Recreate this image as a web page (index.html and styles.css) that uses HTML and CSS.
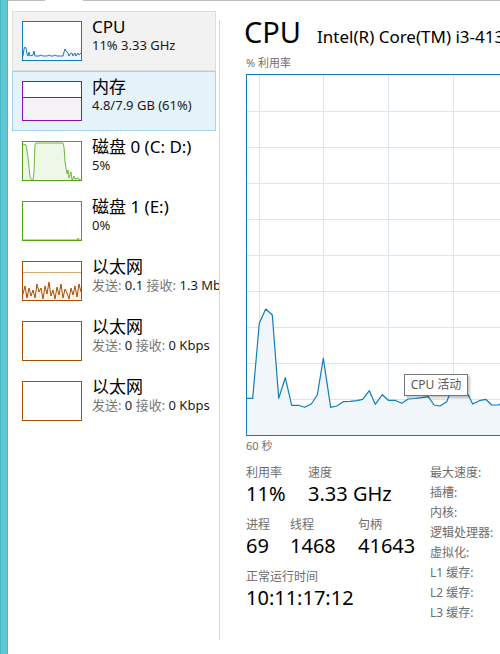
FILE: index.html
```html
<!DOCTYPE html>
<html lang="zh-CN">
<head>
<meta charset="utf-8">
<title>任务管理器 - 性能</title>
<link rel="stylesheet" href="styles.css">
</head>
<body>
<div class="app">
  <div class="rail"></div>
  <div class="content">
    <div class="topline"><span class="seg seg-a"></span><span class="seg-gap"></span><span class="seg seg-b"></span></div>
    <div class="panes">
      <nav class="sidebar">
        <div class="item item-cpu">
          <div class="thumb thumb-cpu">
            <svg width="58" height="38" viewBox="0 0 58 38">
              <polygon class="cpu-fill" points="0,34 1,27 2,25 3,26 4,32 5,34 6,30 7,34 10,33 11,29 12,34 16,34 18,33 20,34 24,34 26,33 28,34 30,34 32,33 34,34 40,34 41,30 42,27 43,29 45,31 46,34 47,32 49,31 50,34 52,31 53,34 55,31 56,33 58,31 58,38 0,38"/>
              <polyline class="cpu-line" points="0,34 1,27 2,25 3,26 4,32 5,34 6,30 7,34 10,33 11,29 12,34 16,34 18,33 20,34 24,34 26,33 28,34 30,34 32,33 34,34 40,34 41,30 42,27 43,29 45,31 46,34 47,32 49,31 50,34 52,31 53,34 55,31 56,33 58,31"/>
            </svg>
          </div>
          <div class="text">
            <div class="title">CPU</div>
            <div class="sub">11% 3.33 GHz</div>
          </div>
        </div>
        <div class="item item-mem">
          <div class="thumb thumb-mem">
            <svg width="58" height="38" viewBox="0 0 58 38">
              <rect class="mem-fill" x="0" y="15" width="58" height="23"/>
              <line class="mem-line" x1="0" y1="15.5" x2="58" y2="15.5"/>
            </svg>
          </div>
          <div class="text">
            <div class="title">内存</div>
            <div class="sub">4.8/7.9 GB (61%)</div>
          </div>
        </div>
        <div class="item">
          <div class="thumb thumb-disk">
            <svg width="58" height="38" viewBox="0 0 58 38">
              <polygon class="disk-fill" points="0,2 3,3 5,15 7,35 9,38 10,38 11,30 12,3 13,1 40,1 41,5 42,20 44,32 45,28 46,36 48,30 49,38 51,34 52,37 55,36 57,38 58,38 0,38"/>
              <polyline class="disk-line" points="0,2 3,3 5,15 7,35 9,38 10,38 11,30 12,3 13,1 40,1 41,5 42,20 44,32 45,28 46,36 48,30 49,38 51,34 52,37 55,36 57,38 58,38"/>
            </svg>
          </div>
          <div class="text">
            <div class="title">磁盘 0 (C: D:)</div>
            <div class="sub">5%</div>
          </div>
        </div>
        <div class="item">
          <div class="thumb thumb-disk">
            <svg width="58" height="38" viewBox="0 0 58 38">
              <polyline class="disk-line" points="0,38 54,38 55,36 56,38 58,38"/>
            </svg>
          </div>
          <div class="text">
            <div class="title">磁盘 1 (E:)</div>
            <div class="sub">0%</div>
          </div>
        </div>
        <div class="item">
          <div class="thumb thumb-eth">
            <svg width="58" height="38" viewBox="0 0 58 38">
              <line class="eth-scale" x1="0" y1="10.5" x2="58" y2="10.5"/>
              <polygon class="eth-fill" points="0,32 2,24 4,36 6,26 8,34 10,28 12,36 14,22 16,30 18,26 20,37 22,24 24,32 26,20 28,34 30,28 32,37 34,25 36,33 38,22 40,36 42,27 44,31 46,37 48,26 50,33 52,24 54,35 56,22 58,30 58,38 0,38"/>
              <polyline class="eth-line" points="0,32 2,24 4,36 6,26 8,34 10,28 12,36 14,22 16,30 18,26 20,37 22,24 24,32 26,20 28,34 30,28 32,37 34,25 36,33 38,22 40,36 42,27 44,31 46,37 48,26 50,33 52,24 54,35 56,22 58,30"/>
            </svg>
          </div>
          <div class="text">
            <div class="title">以太网</div>
            <div class="sub"><span class="k">发送:</span> 0.1 <span class="k">接收:</span> 1.3 Mbps</div>
          </div>
        </div>
        <div class="item">
          <div class="thumb thumb-eth"></div>
          <div class="text">
            <div class="title">以太网</div>
            <div class="sub"><span class="k">发送:</span> 0 <span class="k">接收:</span> 0 Kbps</div>
          </div>
        </div>
        <div class="item">
          <div class="thumb thumb-eth"></div>
          <div class="text">
            <div class="title">以太网</div>
            <div class="sub"><span class="k">发送:</span> 0 <span class="k">接收:</span> 0 Kbps</div>
          </div>
        </div>
      </nav>
      <div class="divider"></div>
      <main class="detail">
        <div class="header">
          <span class="big">CPU</span>
          <span class="model">Intel(R) Core(TM) i3-4130 CPU @ 3.40GHz</span>
        </div>
        <div class="axis">% 利用率</div>
        <div class="chart">
          <svg width="650" height="360" viewBox="0 0 650 360">
            <g class="grid">
              <line x1="12.5" y1="0" x2="12.5" y2="360"/>
              <line x1="76.5" y1="0" x2="76.5" y2="360"/>
              <line x1="141.5" y1="0" x2="141.5" y2="360"/>
              <line x1="206.5" y1="0" x2="206.5" y2="360"/>
              <line x1="271.5" y1="0" x2="271.5" y2="360"/>
              <line x1="0" y1="36.5" x2="650" y2="36.5"/>
              <line x1="0" y1="72.5" x2="650" y2="72.5"/>
              <line x1="0" y1="108.5" x2="650" y2="108.5"/>
              <line x1="0" y1="144.5" x2="650" y2="144.5"/>
              <line x1="0" y1="180.5" x2="650" y2="180.5"/>
              <line x1="0" y1="216.5" x2="650" y2="216.5"/>
              <line x1="0" y1="252.5" x2="650" y2="252.5"/>
              <line x1="0" y1="288.5" x2="650" y2="288.5"/>
              <line x1="0" y1="324.5" x2="650" y2="324.5"/>
            </g>
            <polygon class="area" points="0,323.3 5.7,323.3 12.3,248.3 18.7,234 25.3,240 31.7,323.3 38.3,302.7 44.7,330.3 51.3,330.3 57.7,332.3 64.3,329 70.3,320 76.3,283.3 83.7,332.3 89.7,331 96.3,326.7 103,326.3 109.7,325.7 115.7,324.3 122.3,315.7 128.3,329.3 135.3,319.7 141.3,325.3 148,325.3 154.7,328.3 161.3,324 168,323.5 174.7,322.7 181.3,321.7 187,330 193,331 199.7,326.7 202.3,320 206,313 215,317 221.3,320 225.7,329 232.3,325.7 238.7,324.3 244.7,330 251.3,330 258,327 264,329 270,326 270,360 0,360"/>
            <polyline class="trace" points="0,323.3 5.7,323.3 12.3,248.3 18.7,234 25.3,240 31.7,323.3 38.3,302.7 44.7,330.3 51.3,330.3 57.7,332.3 64.3,329 70.3,320 76.3,283.3 83.7,332.3 89.7,331 96.3,326.7 103,326.3 109.7,325.7 115.7,324.3 122.3,315.7 128.3,329.3 135.3,319.7 141.3,325.3 148,325.3 154.7,328.3 161.3,324 168,323.5 174.7,322.7 181.3,321.7 187,330 193,331 199.7,326.7 202.3,320 206,313 215,317 221.3,320 225.7,329 232.3,325.7 238.7,324.3 244.7,330 251.3,330 258,327 264,329 270,326"/>
          </svg>
          <div class="tooltip">CPU 活动</div>
        </div>
        <div class="axis axis-bottom">60 秒</div>
        <div class="stats">
          <div class="stats-left">
            <div class="row">
              <div class="cell w62"><div class="label">利用率</div><div class="value">11%</div></div>
              <div class="cell"><div class="label">速度</div><div class="value">3.33 GHz</div></div>
            </div>
            <div class="row">
              <div class="cell w44"><div class="label">进程</div><div class="value">69</div></div>
              <div class="cell w68"><div class="label">线程</div><div class="value">1468</div></div>
              <div class="cell"><div class="label">句柄</div><div class="value">41643</div></div>
            </div>
            <div class="row">
              <div class="cell"><div class="label">正常运行时间</div><div class="value">10:11:17:12</div></div>
            </div>
          </div>
          <div class="stats-right">
            <div class="prop">最大速度:</div>
            <div class="prop">插槽:</div>
            <div class="prop">内核:</div>
            <div class="prop">逻辑处理器:</div>
            <div class="prop">虚拟化:</div>
            <div class="prop">L1 缓存:</div>
            <div class="prop">L2 缓存:</div>
            <div class="prop">L3 缓存:</div>
          </div>
        </div>
      </main>
    </div>
  </div>
</div>
</body>
</html>
```
FILE: styles.css
```css
* { box-sizing: border-box; }

html, body {
  margin: 0;
  padding: 0;
  background: #ffffff;
}

body {
  width: 500px;
  height: 654px;
  overflow: hidden;
  font-family: "Noto Sans", "Noto Sans CJK SC", sans-serif;
  color: #000;
}

.app {
  display: flex;
  width: 500px;
  height: 654px;
}

.rail {
  width: 8px;
  flex: 0 0 8px;
  background: #5ec8d5;
  border-left: 1px solid #4cb6c4;
  border-right: 1px solid #4cb6c4;
}

.content {
  flex: 1;
  display: flex;
  flex-direction: column;
  min-width: 0;
}

.topline {
  display: flex;
  height: 1px;
  flex: 0 0 1px;
}
.seg { background: #bdbdbd; }
.seg-a { width: 37px; }
.seg-gap { width: 38px; }
.seg-b { flex: 1; }

.panes {
  flex: 1;
  display: flex;
  min-height: 0;
}

/* ---------- sidebar ---------- */
.sidebar {
  width: 211px;
  flex: 0 0 211px;
  padding: 10px 0 0 4px;
  overflow: hidden;
}

.item {
  display: flex;
  align-items: flex-start;
  width: 204px;
  height: 60px;
  border: 1px solid transparent;
  padding-left: 9px;
  white-space: nowrap;
}
.item-cpu {
  background: #f2f2f2;
  border-color: #dedede;
}
.item-mem {
  background: #e5f3fb;
  border-color: #a3d4ef;
}

.thumb {
  width: 60px;
  height: 40px;
  flex: 0 0 60px;
  margin-top: 9px;
  border: 1px solid #117dbb;
  background: #fff;
  overflow: hidden;
}
.thumb svg { display: block; }
.thumb-cpu { border-color: #117dbb; }
.thumb-mem { border-color: #8b12ae; }
.thumb-disk { border-color: #4da60c; }
.thumb-eth { border-color: #a74f01; }

.cpu-fill { fill: #f1f6fa; }
.cpu-line { fill: none; stroke: #117dbb; stroke-width: 1; }
.mem-fill { fill: #f4f2f4; }
.mem-line { stroke: #8b12ae; stroke-width: 1; }
.disk-fill { fill: #eff7e9; }
.disk-line { fill: none; stroke: #6fb83c; stroke-width: 1; }
.eth-scale { stroke: #d8a878; stroke-width: 1; }
.eth-fill { fill: #fcf3eb; }
.eth-line { fill: none; stroke: #a74f01; stroke-width: 1; }

.text {
  margin-left: 10px;
  margin-top: 4.5px;
}
.title {
  font-size: 17px;
  line-height: 20px;
  color: #000;
}
.sub {
  font-size: 13px;
  line-height: 16px;
  color: #1a1a1a;
}
.sub .k { color: #777; }

.divider {
  width: 1px;
  flex: 0 0 1px;
  background: #d6d6d6;
  margin-top: 19px;
  height: 620px;
}

/* ---------- detail ---------- */
.detail {
  flex: 1;
  min-width: 0;
  overflow: hidden;
  padding-left: 26px;
}

.header {
  display: flex;
  align-items: baseline;
  height: 52px;
  padding-top: 12px;
  margin-left: -2px;
  white-space: nowrap;
}
.big {
  font-size: 29px;
  line-height: 37px;
  color: #000;
}
.model {
  font-size: 17px;
  line-height: 22px;
  margin-left: 16px;
  color: #000;
}

.axis {
  font-size: 11px;
  line-height: 19px;
  height: 19px;
  color: #707070;
  margin-bottom: 2px;
  white-space: nowrap;
}
.axis-bottom {
  line-height: 16px;
  height: 16px;
  margin-top: 2px;
  margin-bottom: 9px;
}

.chart {
  position: relative;
  width: 652px;
  height: 362px;
  border: 1px solid #117dbb;
  background: #fff;
}
.chart svg { display: block; }
.grid line { stroke: #d9e6f0; stroke-width: 1; }
.area { fill: #f1f6fa; }
.trace { fill: none; stroke: #117dbb; stroke-width: 1.2; stroke-linejoin: round; }

.tooltip {
  position: absolute;
  left: 157px;
  top: 299px;
  width: 64px;
  height: 22px;
  border: 1px solid #767676;
  background: #fff;
  font-size: 12px;
  line-height: 20px;
  text-align: center;
  color: #575757;
  box-shadow: 2px 2px 2px rgba(0, 0, 0, 0.22);
  white-space: nowrap;
}

.stats {
  display: flex;
  white-space: nowrap;
}
.stats-left {
  width: 184px;
  flex: 0 0 184px;
  padding-top: 2px;
}
.row {
  display: flex;
  margin-bottom: 10px;
}
.cell.w62 { width: 62px; }
.cell.w44 { width: 44px; }
.cell.w68 { width: 68px; }
.label {
  font-size: 12px;
  line-height: 16px;
  color: #6d6d6d;
}
.value {
  font-size: 20px;
  line-height: 26px;
  color: #000;
}
.stats-right .prop {
  font-size: 12px;
  line-height: 20px;
  color: #6d6d6d;
}
```
